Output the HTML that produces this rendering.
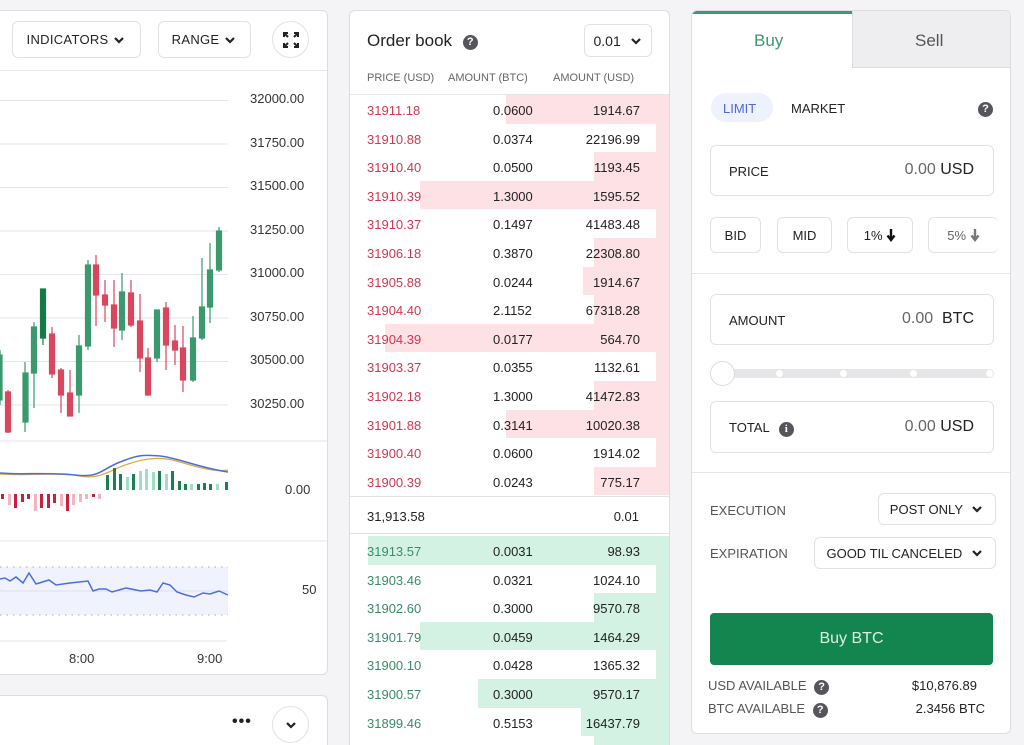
<!DOCTYPE html>
<html style="width:1024px;height:745px;overflow:hidden"><head><meta charset="utf-8"><style>
*{box-sizing:border-box;margin:0;padding:0}
body{width:1024px;height:745px;overflow:hidden;background:#f4f4f7;font-family:"Liberation Sans",sans-serif;color:#222;position:relative}
.abs{position:absolute}
.panel{position:absolute;background:#fff;border:1px solid #dcdce2;border-radius:6px}
.btn{position:absolute;border:1px solid #e2e2e6;border-radius:6px;background:#fff;font-size:13px;display:flex;align-items:center;justify-content:center;color:#222}
.t{position:absolute;white-space:nowrap}
.row{position:absolute;left:0;width:320px;height:28.6px;font-size:13px}
.row span{position:absolute;top:8px}
.bar{position:absolute;top:0;bottom:0;right:0}
.box{position:absolute;border:1px solid #e2e2e6;border-radius:6px;background:#fff}
.q{display:inline-block;width:15px;height:15px;border-radius:50%;background:#55555c;color:#fff;font-size:11px;font-weight:bold;text-align:center;line-height:15px}
</style></head><body>

<div class="panel" style="left:-10px;top:10px;width:338px;height:665px"></div>
<div class="abs" style="left:0;top:70px;width:327px;height:1px;background:#e6e6ea"></div>
<div class="btn" style="left:12px;top:21px;width:129px;height:37px;letter-spacing:.3px">INDICATORS&nbsp;<svg width="14" height="10" viewBox="0 0 14 10"><path d="M3 3l4 4 4-4" stroke="#222" stroke-width="2.2" fill="none"/></svg></div>
<div class="btn" style="left:158px;top:21px;width:93px;height:37px;letter-spacing:.3px">RANGE&nbsp;<svg width="14" height="10" viewBox="0 0 14 10"><path d="M3 3l4 4 4-4" stroke="#222" stroke-width="2.2" fill="none"/></svg></div>
<div class="btn" style="left:272px;top:21px;width:37px;height:37px;border-radius:50%"><svg width="16" height="16" viewBox="0 0 16 16" stroke="#222" stroke-width="2" fill="none"><path d="M1 5V1h4M1 1l4 4M15 5V1h-4M15 1l-4 4M1 11v4h4M1 15l4-4M15 11v4h-4M15 15l-4-4"/></svg></div>

<svg class="abs" style="left:0;top:0" width="330" height="680">
<g stroke="#e4e4ea" stroke-width="1">
<line x1="0" x2="228" y1="100.5" y2="100.5"/><line x1="0" x2="228" y1="144" y2="144"/><line x1="0" x2="228" y1="187.5" y2="187.5"/><line x1="0" x2="228" y1="231" y2="231"/><line x1="0" x2="228" y1="274.5" y2="274.5"/><line x1="0" x2="228" y1="318" y2="318"/><line x1="0" x2="228" y1="361.5" y2="361.5"/><line x1="0" x2="228" y1="405" y2="405"/>
<line x1="0" x2="327" y1="441" y2="441"/><line x1="0" x2="327" y1="541" y2="541"/><line x1="0" x2="227" y1="641" y2="641"/>
</g>
<g font-size="13" fill="#333" font-family="Liberation Sans">
<text x="250" y="103">32000.00</text><text x="250" y="147">31750.00</text><text x="250" y="190">31500.00</text><text x="250" y="234">31250.00</text><text x="250" y="277">31000.00</text><text x="250" y="321">30750.00</text><text x="250" y="364">30500.00</text><text x="250" y="408">30250.00</text>
<text x="285" y="494">0.00</text><text x="302" y="594">50</text><text x="69" y="663">8:00</text><text x="197" y="663">9:00</text>
</g>
<g stroke-width="1.2">
<g stroke="#3a9a6e" fill="#3a9a6e">
<line x1="0" x2="0" y1="350" y2="405"/><rect x="-2" y="355" width="4" height="45"/>
<line x1="25" x2="25" y1="362" y2="432"/><rect x="23" y="373" width="5" height="49"/>
<line x1="34" x2="34" y1="322" y2="408"/><rect x="31.5" y="327" width="5" height="46"/>
<line x1="79" x2="79" y1="335" y2="413"/><rect x="76.5" y="346" width="5" height="49"/>
<line x1="88" x2="88" y1="260" y2="350"/><rect x="85.5" y="265" width="5" height="81"/>
<line x1="122" x2="122" y1="273" y2="340"/><rect x="119.5" y="292" width="5" height="38"/>
<line x1="157" x2="157" y1="310" y2="362"/><rect x="154.5" y="310" width="5" height="48"/>
<line x1="193" x2="193" y1="316" y2="382"/><rect x="190.5" y="338" width="5" height="42"/>
<line x1="202" x2="202" y1="258" y2="340"/><rect x="199.5" y="307" width="5" height="31"/>
<line x1="210" x2="210" y1="243" y2="323"/><rect x="207.5" y="270" width="5" height="37"/>
<line x1="219" x2="219" y1="227" y2="272"/><rect x="216.5" y="231" width="5" height="39"/>
</g>
<g stroke="#137a48" fill="#137a48"><line x1="43" x2="43" y1="289" y2="345"/><rect x="40.5" y="289" width="5" height="49"/></g>
<g stroke="#d9475e" fill="#d9475e">
<line x1="8" x2="8" y1="390" y2="433"/><rect x="5.5" y="392" width="5" height="40"/>
<line x1="52" x2="52" y1="327" y2="378"/><rect x="49.5" y="334" width="5" height="40"/>
<line x1="61" x2="61" y1="368" y2="413"/><rect x="58.5" y="370" width="5" height="25"/>
<line x1="70" x2="70" y1="370" y2="416"/><rect x="67.5" y="393" width="5" height="23"/>
<line x1="96" x2="96" y1="255" y2="326"/><rect x="93.5" y="265" width="5" height="30"/>
<line x1="105" x2="105" y1="280" y2="322"/><rect x="102.5" y="295" width="5" height="10"/>
<line x1="114" x2="114" y1="280" y2="347"/><rect x="111.5" y="305" width="5" height="23"/>
<line x1="131" x2="131" y1="280" y2="327"/><rect x="128.5" y="293" width="5" height="32"/>
<line x1="140" x2="140" y1="294" y2="372"/><rect x="137.5" y="321" width="5" height="37"/>
<line x1="148" x2="148" y1="348" y2="395"/><rect x="145.5" y="358" width="5" height="37"/>
<line x1="166" x2="166" y1="302" y2="370"/><rect x="163.5" y="308" width="5" height="37"/>
<line x1="175" x2="175" y1="325" y2="365"/><rect x="172.5" y="341" width="5" height="9"/>
<line x1="183" x2="183" y1="326" y2="392"/><rect x="180.5" y="348" width="5" height="32"/>
</g>
</g>
<path d="M0 474 C30 476 60 472 80 476 S110 470 128 464 S160 456 180 462 S215 472 228 470" stroke="#e0a93a" stroke-width="1.3" fill="none"/>
<path d="M0 473 C20 475 50 472 75 475 S100 470 120 462 S145 455 160 456 S200 468 228 472" stroke="#4a6ee0" stroke-width="1.5" fill="none"/>
<g fill="#1c7f4f">
<rect x="106" y="475" width="3" height="15"/><rect x="113" y="468" width="3" height="22"/><rect x="119" y="474" width="3" height="16"/><rect x="132" y="474" width="3" height="16"/><rect x="158" y="471" width="3" height="19"/><rect x="171" y="471" width="3" height="19"/><rect x="178" y="481" width="3" height="9"/><rect x="184" y="484" width="3" height="6"/><rect x="197" y="484" width="3" height="6"/><rect x="203" y="483" width="3" height="7"/><rect x="209" y="484" width="3" height="6"/><rect x="225" y="482" width="3" height="8"/></g>
<g fill="#9de0c3"><rect x="126" y="477" width="3" height="13"/><rect x="139" y="471" width="3" height="19"/><rect x="145" y="469" width="3" height="21"/><rect x="152" y="472" width="3" height="18"/><rect x="165" y="474" width="3" height="16"/><rect x="190" y="484" width="3" height="6"/><rect x="216" y="484" width="3" height="6"/></g>
<g fill="#c8203f"><rect x="1" y="494" width="3" height="5"/><rect x="14" y="494" width="3" height="14"/><rect x="21" y="494" width="3" height="8"/><rect x="27" y="494" width="3" height="5"/><rect x="40" y="494" width="3" height="14"/><rect x="47" y="494" width="3" height="14"/><rect x="53" y="494" width="3" height="9"/><rect x="66" y="494" width="3" height="17"/><rect x="92" y="494" width="3" height="3"/></g>
<g fill="#f5b3c0"><rect x="8" y="494" width="3" height="11"/><rect x="34" y="494" width="3" height="17"/><rect x="60" y="494" width="3" height="12"/><rect x="72" y="494" width="3" height="11"/><rect x="79" y="494" width="3" height="8"/><rect x="85" y="494" width="3" height="5"/><rect x="98" y="494" width="3" height="5"/></g>
<rect x="0" y="567" width="228" height="48" fill="#f0f3fd"/>
<line x1="0" x2="228" y1="567" y2="567" stroke="#aaa" stroke-dasharray="1.5 5"/>
<line x1="0" x2="228" y1="615" y2="615" stroke="#aaa" stroke-dasharray="1.5 5"/>
<line x1="0" x2="228" y1="591" y2="591" stroke="#dde"/>
<polyline fill="none" stroke="#4a6ee0" stroke-width="1.5" points="0,579 5,578 10,581 16,577 23,583 29,573 36,584 49,580 56,585 70,583 88,581 93,591 99,589 106,589 112,592 126,588 141,591 150,590 157,592 163,583 170,585 177,592 186,595 194,597 203,593 210,594 219,591 228,595"/>
</svg>

<div class="panel" style="left:-10px;top:695px;width:338px;height:50px;border-bottom:none;border-radius:6px 6px 0 0"></div>
<div class="t" style="left:232px;top:713px;font-size:16px;font-weight:bold;letter-spacing:1px">•••</div>
<div class="btn" style="left:272px;top:706px;width:37px;height:37px;border-radius:50%"><svg width="14" height="10" viewBox="0 0 14 10"><path d="M3 3l4 4 4-4" stroke="#222" stroke-width="2.2" fill="none"/></svg></div>

<div class="panel" style="left:349px;top:10px;width:321px;height:735px;overflow:hidden;border-bottom:none;border-radius:6px 6px 0 0">
 <div class="t" style="left:17px;top:20px;font-size:17px;color:#222">Order book <span class="q" style="margin-left:6px;vertical-align:1px">?</span></div>
 <div class="btn" style="left:234px;top:13px;width:68px;height:33px;font-size:14px">0.01&nbsp;&nbsp;<svg width="14" height="10" viewBox="0 0 14 10"><path d="M3 3l4 4 4-4" stroke="#222" stroke-width="2.2" fill="none"/></svg></div>
 <div class="t" style="left:17px;top:61px;font-size:11px;color:#666">PRICE (USD)</div>
 <div class="t" style="left:98px;top:61px;font-size:11px;color:#666">AMOUNT (BTC)</div>
 <div class="t" style="left:203px;top:61px;font-size:11px;color:#666">AMOUNT (USD)</div>
 <div class="abs" style="left:0;top:83px;width:321px;height:1px;background:#e6e6ea"></div>
 <div class="abs" style="left:0;top:84px;width:319px">
<div class="row" style="top:0"><div class="bar" style="left:156px;background:#fde1e5"></div><span style="left:17px;color:#d0384f">31911.18</span><span style="left:143px">0.0600</span><span style="right:30px">1914.67</span></div>
<div class="row" style="top:28.6px"><div class="bar" style="left:306px;background:#fde1e5"></div><span style="left:17px;color:#d0384f">31910.88</span><span style="left:143px">0.0374</span><span style="right:30px">22196.99</span></div>
<div class="row" style="top:57.2px"><div class="bar" style="left:244px;background:#fde1e5"></div><span style="left:17px;color:#d0384f">31910.40</span><span style="left:143px">0.0500</span><span style="right:30px">1193.45</span></div>
<div class="row" style="top:85.8px"><div class="bar" style="left:70px;background:#fde1e5"></div><span style="left:17px;color:#d0384f">31910.39</span><span style="left:143px">1.3000</span><span style="right:30px">1595.52</span></div>
<div class="row" style="top:114.4px"><div class="bar" style="left:306px;background:#fde1e5"></div><span style="left:17px;color:#d0384f">31910.37</span><span style="left:143px">0.1497</span><span style="right:30px">41483.48</span></div>
<div class="row" style="top:143px"><div class="bar" style="left:244px;background:#fde1e5"></div><span style="left:17px;color:#d0384f">31906.18</span><span style="left:143px">0.3870</span><span style="right:30px">22308.80</span></div>
<div class="row" style="top:171.6px"><div class="bar" style="left:233px;background:#fde1e5"></div><span style="left:17px;color:#d0384f">31905.88</span><span style="left:143px">0.0244</span><span style="right:30px">1914.67</span></div>
<div class="row" style="top:200.2px"><div class="bar" style="left:244px;background:#fde1e5"></div><span style="left:17px;color:#d0384f">31904.40</span><span style="left:143px">2.1152</span><span style="right:30px">67318.28</span></div>
<div class="row" style="top:228.8px"><div class="bar" style="left:35px;background:#fde1e5"></div><span style="left:17px;color:#d0384f">31904.39</span><span style="left:143px">0.0177</span><span style="right:30px">564.70</span></div>
<div class="row" style="top:257.4px"><div class="bar" style="left:306px;background:#fde1e5"></div><span style="left:17px;color:#d0384f">31903.37</span><span style="left:143px">0.0355</span><span style="right:30px">1132.61</span></div>
<div class="row" style="top:286px"><div class="bar" style="left:244px;background:#fde1e5"></div><span style="left:17px;color:#d0384f">31902.18</span><span style="left:143px">1.3000</span><span style="right:30px">41472.83</span></div>
<div class="row" style="top:314.6px"><div class="bar" style="left:156px;background:#fde1e5"></div><span style="left:17px;color:#d0384f">31901.88</span><span style="left:143px">0.3141</span><span style="right:30px">10020.38</span></div>
<div class="row" style="top:343.2px"><div class="bar" style="left:306px;background:#fde1e5"></div><span style="left:17px;color:#d0384f">31900.40</span><span style="left:143px">0.0600</span><span style="right:30px">1914.02</span></div>
<div class="row" style="top:371.8px"><div class="bar" style="left:244px;background:#fde1e5"></div><span style="left:17px;color:#d0384f">31900.39</span><span style="left:143px">0.0243</span><span style="right:30px">775.17</span></div>
<div class="abs" style="left:0;top:401px;width:319px;height:1px;background:#e2e2e6"></div>
<div class="t" style="left:17px;top:414px;font-size:13px">31,913.58</div><div class="t" style="right:30px;top:414px;font-size:13px">0.01</div>
<div class="abs" style="left:0;top:438px;width:319px;height:1px;background:#e2e2e6"></div>
<div class="row" style="top:441px"><div class="bar" style="left:18px;background:#d3f2e4"></div><span style="left:17px;color:#3a8c68">31913.57</span><span style="left:143px">0.0031</span><span style="right:30px">98.93</span></div>
<div class="row" style="top:469.6px"><div class="bar" style="left:306px;background:#d3f2e4"></div><span style="left:17px;color:#3a8c68">31903.46</span><span style="left:143px">0.0321</span><span style="right:30px">1024.10</span></div>
<div class="row" style="top:498.2px"><div class="bar" style="left:244px;background:#d3f2e4"></div><span style="left:17px;color:#3a8c68">31902.60</span><span style="left:143px">0.3000</span><span style="right:30px">9570.78</span></div>
<div class="row" style="top:526.8px"><div class="bar" style="left:70px;background:#d3f2e4"></div><span style="left:17px;color:#3a8c68">31901.79</span><span style="left:143px">0.0459</span><span style="right:30px">1464.29</span></div>
<div class="row" style="top:555.4px"><div class="bar" style="left:306px;background:#d3f2e4"></div><span style="left:17px;color:#3a8c68">31900.10</span><span style="left:143px">0.0428</span><span style="right:30px">1365.32</span></div>
<div class="row" style="top:584px"><div class="bar" style="left:128px;background:#d3f2e4"></div><span style="left:17px;color:#3a8c68">31900.57</span><span style="left:143px">0.3000</span><span style="right:30px">9570.17</span></div>
<div class="row" style="top:612.6px"><div class="bar" style="left:231px;background:#d3f2e4"></div><span style="left:17px;color:#3a8c68">31899.46</span><span style="left:143px">0.5153</span><span style="right:30px">16437.79</span></div>
<div class="row" style="top:641.2px"><div class="bar" style="left:244px;background:#d3f2e4"></div><span style="left:17px;color:#3a8c68">31898.90</span><span style="left:143px">0.1102</span><span style="right:30px">1775.77</span></div>
 </div>
</div>

<div class="panel" style="left:691px;top:10px;width:320px;height:724px;overflow:hidden">
 <div class="abs" style="left:0;top:0;width:160px;height:57px;border-top:3px solid #3c9a6e;background:#fff"></div>
 <div class="abs" style="left:160px;top:0;width:160px;height:57px;background:#eeeef1;border-left:1px solid #dcdce2;border-bottom:1px solid #dcdce2"></div>
 <div class="t" style="left:62px;top:20px;font-size:17px;color:#3c9a6e">Buy</div>
 <div class="t" style="left:223px;top:20px;font-size:17px;color:#555">Sell</div>
 <div class="abs" style="left:19px;top:82px;width:62px;height:29px;border-radius:15px;background:#eef2fc"></div>
 <div class="t" style="left:31px;top:90px;font-size:13px;color:#4a68d8">LIMIT</div>
 <div class="t" style="left:99px;top:90px;font-size:13px;color:#222">MARKET</div>
 <div class="t" style="left:286px;top:88px"><span class="q">?</span></div>
 <div class="box" style="left:18px;top:134px;width:284px;height:51px"></div>
 <div class="t" style="left:37px;top:153px;font-size:13px">PRICE</div>
 <div class="t" style="right:36px;top:150px;font-size:16px"><span style="color:#666">0.00</span> USD</div>
 <div class="btn" style="left:18px;top:206px;width:51px;height:36px">BID</div>
 <div class="btn" style="left:85px;top:206px;width:55px;height:36px">MID</div>
 <div class="btn" style="left:155px;top:206px;width:66px;height:36px">1%&nbsp;<svg width="10" height="14" viewBox="0 0 10 14"><path d="M5 1v10M1.5 7.5L5 12l3.5-4.5" stroke="#111" stroke-width="2.4" fill="none"/></svg></div>
 <div class="btn" style="left:236px;top:206px;width:70px;height:36px;color:#666;border-right:none">5%&nbsp;<svg width="10" height="14" viewBox="0 0 10 14"><path d="M5 1v10M1.5 7.5L5 12l3.5-4.5" stroke="#777" stroke-width="2.4" fill="none"/></svg></div>
 <div class="abs" style="left:0;top:262px;width:320px;height:1px;background:#e6e6ea"></div>
 <div class="box" style="left:18px;top:283px;width:284px;height:51px"></div>
 <div class="t" style="left:37px;top:302px;font-size:13px">AMOUNT</div>
 <div class="t" style="right:36px;top:299px;font-size:16px"><span style="color:#666">0.00</span>&nbsp; BTC</div>
 <div class="abs" style="left:30px;top:358px;width:272px;height:9px;border-radius:5px;background:#e6e6e9"></div>
 <div class="abs" style="left:84px;top:359px;width:7px;height:7px;border-radius:50%;background:#fff"></div>
 <div class="abs" style="left:148px;top:359px;width:7px;height:7px;border-radius:50%;background:#fff"></div>
 <div class="abs" style="left:218px;top:359px;width:7px;height:7px;border-radius:50%;background:#fff"></div>
 <div class="abs" style="left:294px;top:359px;width:7px;height:7px;border-radius:50%;background:#fff"></div>
 <div class="abs" style="left:18px;top:350px;width:25px;height:25px;border-radius:50%;background:#fff;border:1px solid #ddd"></div>
 <div class="box" style="left:18px;top:390px;width:284px;height:52px"></div>
 <div class="t" style="left:37px;top:409px;font-size:13px">TOTAL <span class="q" style="margin-left:6px;font-family:'Liberation Serif',serif">i</span></div>
 <div class="t" style="right:36px;top:407px;font-size:16px"><span style="color:#666">0.00</span> USD</div>
 <div class="abs" style="left:0;top:461px;width:320px;height:1px;background:#e6e6ea"></div>
 <div class="t" style="left:18px;top:492px;font-size:13px;color:#555">EXECUTION</div>
 <div class="btn" style="left:186px;top:482px;width:118px;height:32px">POST ONLY&nbsp;&nbsp;<svg width="14" height="10" viewBox="0 0 14 10"><path d="M3 3l4 4 4-4" stroke="#222" stroke-width="2.2" fill="none"/></svg></div>
 <div class="t" style="left:18px;top:535px;font-size:13px;color:#555">EXPIRATION</div>
 <div class="btn" style="left:122px;top:526px;width:182px;height:32px">GOOD TIL CANCELED&nbsp;&nbsp;<svg width="14" height="10" viewBox="0 0 14 10"><path d="M3 3l4 4 4-4" stroke="#222" stroke-width="2.2" fill="none"/></svg></div>
 <div class="abs" style="left:18px;top:602px;width:283px;height:52px;border-radius:4px;background:#13864f;color:#d8f0e2;font-size:16px;display:flex;align-items:center;justify-content:center">Buy BTC</div>
 <div class="t" style="left:16px;top:667px;font-size:13px;color:#555">USD AVAILABLE <span class="q" style="margin-left:4px">?</span></div>
 <div class="t" style="right:33px;top:667px;font-size:13px">$10,876.89</div>
 <div class="t" style="left:16px;top:690px;font-size:13px;color:#555">BTC AVAILABLE <span class="q" style="margin-left:4px">?</span></div>
 <div class="t" style="right:25px;top:690px;font-size:13px">2.3456 BTC</div>
</div>
</body></html>
